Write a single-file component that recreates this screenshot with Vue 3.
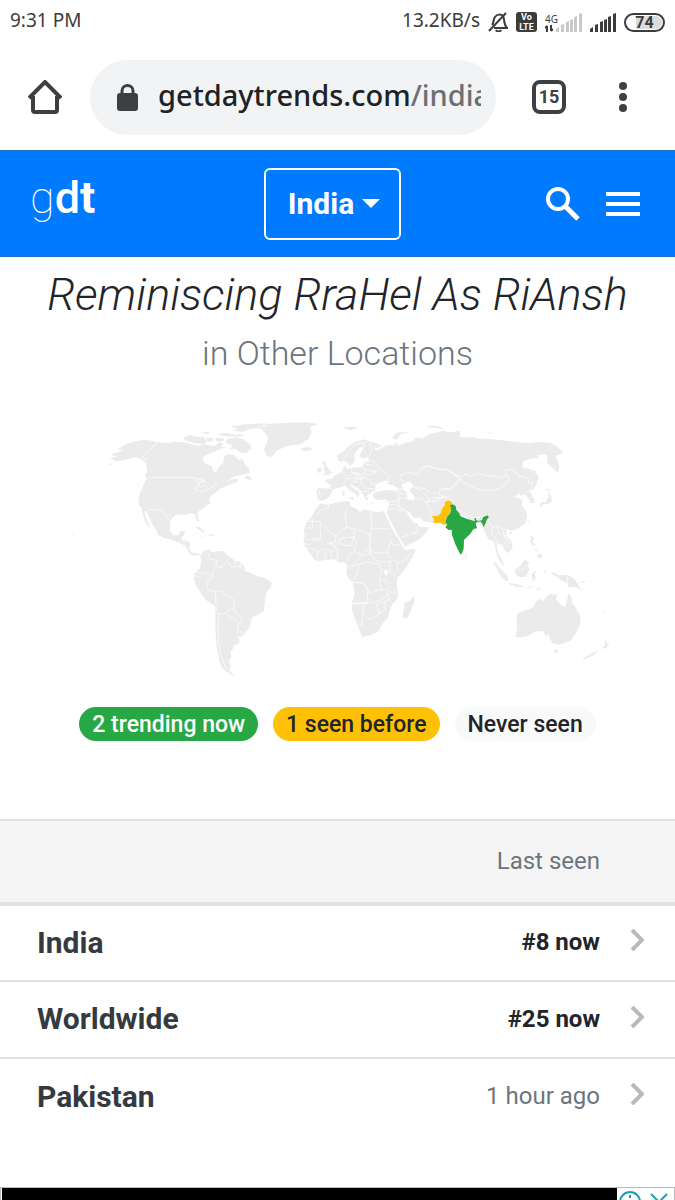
<template>
  <div class="screen">
    <!-- phone status bar -->
    <div class="status">
      <span class="clock">9:31 PM</span>
      <div class="status-right">
        <span class="speed">13.2KB/s</span>
        <svg class="bell" viewBox="0 0 20 20" aria-hidden="true">
          <path d="M1 19 18 1M4 13c2-2 1-6 3-8 2-3 6-3 8-1 2 3 0 8 4 12H6M8 18c1 2 4 2 5 0" />
        </svg>
        <span class="volte"><b>Vo</b><b>LTE</b></span>
        <span class="data">
          <span class="data-label"><small>4G</small>
            <svg viewBox="0 0 8 7" aria-hidden="true"><path d="M2 7V1M0 3l2-2M6 0v6M8 4 6 6" /></svg>
          </span>
          <svg class="bars faded" viewBox="0 0 26 19" aria-hidden="true">
            <path v-for="b in bars" :key="b" :d="b" />
          </svg>
        </span>
        <svg class="bars" viewBox="0 0 26 19" aria-hidden="true">
          <path v-for="b in bars" :key="b" :d="b" />
        </svg>
        <span class="battery"><span class="battery-fill">74</span></span>
      </div>
    </div>

    <!-- browser toolbar -->
    <div class="toolbar">
      <button class="plain" aria-label="Home">
        <svg class="home" viewBox="0 0 34 34"><path d="M1 18 17 2l16 16M5 16v14q0 2 2 2h20q2 0 2-2V16" /></svg>
      </button>
      <div class="address">
        <svg class="lock" viewBox="0 0 21 27" aria-hidden="true">
          <rect x="0" y="9" width="21" height="18" rx="3" />
          <path d="M5 11V7a5 5 0 0 1 11 0v4" />
        </svg>
        <a class="url" href="#">getdaytrends.com<span>/india</span></a>
      </div>
      <button class="tabs" aria-label="Tabs">15</button>
      <button class="plain" aria-label="More">
        <svg class="dots" viewBox="0 0 8 30"><circle cx="4" cy="4" r="4" /><circle cx="4" cy="15" r="4" /><circle cx="4" cy="26" r="4" /></svg>
      </button>
    </div>

    <header class="navbar">
      <a class="logo" href="#"><span>g</span><b>d</b><strong>t</strong></a>
      <button class="country">India <i class="caret"></i></button>
      <div class="nav-icons">
        <button class="plain" aria-label="Search">
          <svg viewBox="0 0 34 34"><circle cx="12" cy="12" r="10" /><path d="m19 19 13 13" class="handle" /></svg>
        </button>
        <button class="plain" aria-label="Menu">
          <svg viewBox="0 0 34 34"><path d="M0 7h34M0 17h34M0 27h34" /></svg>
        </button>
      </div>
    </header>

    <main>
      <h1>Reminiscing RraHel As RiAnsh</h1>
      <h2>in Other Locations</h2>

      <svg class="map" viewBox="0 0 2025 810" role="img" aria-label="World map">
        <g transform="translate(180 0)">
          <path v-for="d in americas" :key="d" :d="d" class="land" />
          <path v-for="d in americaBorders" :key="d" :d="d" class="border" />
        </g>
        <g transform="translate(1260 0)">
          <path v-for="d in eastAsia" :key="d" :d="d" class="land" />
        </g>
        <g transform="translate(840 0)">
          <path v-for="d in euroAfrica" :key="d" :d="d" class="land" />
          <path v-for="d in seas" :key="d" :d="d" class="sea" />
          <path v-for="d in euroAfricaBorders" :key="d" :d="d" class="border" />
        </g>
        <g transform="translate(1260 0)">
          <path v-for="d in eastBorders" :key="d" :d="d" class="border" />
          <path class="now" d="M88 286 98 283 107 288 109 300 118 310 122 319 140 326 160 332 165 334 163 324 167 324 169 331 174 333 186 331 190 321 202 316 207 322 200 329 197 339 191 352 187 341 181 334 171 337 167 340 171 355 161 357 151 371 140 382 132 390 131 416 124 434 119 430 106 403 96 375 95 359 85 360 76 351 82 344 75 337 81 320 91 309 93 294Z" />
          <path class="seen" d="M36 318 53 318 63 309 67 294 75 286 74 276 86 271 97 278 97 283 88 286 93 294 90 309 80 320 75 332 80 343 72 345 64 338 38 338 43 329Z" />
        </g>
      </svg>

      <ul class="legend">
        <li class="badge green">2 trending now</li>
        <li class="badge yellow">1 seen before</li>
        <li class="badge light">Never seen</li>
      </ul>

      <table>
        <thead>
          <tr>
            <th></th>
            <th class="seen-col">Last seen</th>
            <th class="arrow-col"></th>
          </tr>
        </thead>
        <tbody>
          <tr v-for="row in rows" :key="row.place">
            <td><a href="#">{{ row.place }}</a></td>
            <td class="seen-col" :class="{ current: row.now }">{{ row.seen }}</td>
            <td class="arrow-col">
              <svg viewBox="0 0 14 22" aria-hidden="true"><path d="m2 1 10 10L2 21" /></svg>
            </td>
          </tr>
        </tbody>
      </table>
    </main>

    <div class="ad">
      <div class="ad-body"></div>
      <div class="ad-choices">
        <svg viewBox="0 0 54 12" aria-hidden="true">
          <circle cx="13" cy="14" r="10" /><path d="M13 7v3M13 13v3M34 6l16 16M50 6 34 22" />
        </svg>
      </div>
    </div>
  </div>
</template>

<script setup>
const rows = [
  { place: 'India', seen: '#8 now', now: true },
  { place: 'Worldwide', seen: '#25 now', now: true },
  { place: 'Pakistan', seen: '1 hour ago', now: false }
]

const bars = ['M0 19v-3l3-2v5z', 'M5 19v-7l3-1v8z', 'M10 19V9l3-1v11z', 'M14 19V7l3-1v13z', 'M18 19V4l3-1v16z', 'M23 19V1l3-1v19z']

const americas = [
  'M150 145 170 140 152 132 178 126 188 120 172 118 200 102 232 92 258 89 292 97 325 99 345 95 380 98 410 107 440 104 462 108 480 96 490 100 484 110 500 112 480 118 455 128 430 140 428 152 440 162 456 168 460 184 468 188 474 174 490 158 492 142 502 132 524 136 534 150 548 146 556 166 570 180 566 190 545 194 520 200 498 216 520 206 534 207 532 216 505 226 480 236 468 246 455 256 448 266 450 280 430 294 414 306 412 316 417 330 414 338 408 326 404 312 388 310 376 314 350 314 334 326 330 340 330 362 340 376 355 376 362 364 376 362 372 376 364 382 366 390 384 392 390 400 388 416 396 428 408 430 418 430 418 435 400 438 388 428 376 408 360 400 335 390 312 384 294 374 288 360 278 344 266 318 258 302 253 302 256 320 266 340 270 354 256 336 248 312 244 294 236 284 235 262 246 236 256 212 262 206 254 196 262 186 258 160 248 150 228 142 205 146 190 150 170 155Z',
  'M368 84 390 74 410 80 432 82 440 94 434 104 408 100 382 94Z',
  'M440 84 460 84 458 94 442 96Z', 'M466 84 490 84 492 92 470 95Z',
  'M500 88 530 82 550 88 572 104 574 118 560 124 566 130 542 128 528 118 506 118 520 106 498 100Z',
  'M470 72 500 68 524 74 552 72 548 79 500 80Z', 'M420 67 450 65 444 73Z',
  'M510 50 560 42 624 40 600 50 572 57 548 66 520 62 534 55Z',
  'M572 52 625 48 612 43 680 38 740 37 775 42 750 50 755 66 745 88 722 102 680 108 650 122 634 142 618 136 612 116 620 100 624 80 612 66 604 56Z',
  'M554 206 560 196 572 200 576 212Z', 'M142 164 160 158 154 164Z', 'M36 368 42 372 37 374Z',
  'M404 350 420 352 436 366 428 366Z', 'M446 372 466 374 460 378 448 377Z', 'M422 378 432 380 424 382Z',
  'M436 420 448 418 454 426 472 424 490 424 502 436 516 444 526 454 540 454 552 468 556 484 572 488 590 498 614 504 634 516 634 530 618 550 614 578 612 602 596 614 576 622 570 648 556 670 542 682 532 678 540 694 532 704 520 706 520 716 512 724 514 742 506 754 512 766 508 782 516 790 500 786 486 774 478 752 470 710 466 660 466 588 440 572 424 552 408 526 402 508 404 490 420 474 424 450 420 436Z',
  'M508 788 528 796 514 796Z'
]

const americaBorders = [
  'M294 97 244 141 262 152', 'M266 202H400L420 208 436 218', 'M262 299 296 300 314 310 326 330',
  'M400 206 424 208 436 214 424 216 408 212', 'M404 238 416 218 420 232 436 226 442 238 428 246 412 240Z',
  'M440 242 470 222', 'M364 390 358 398M384 392 370 396',
  'M444 428 448 446 470 450 468 470 460 480 458 502 440 514 444 540 466 546 468 588',
  'M404 498 422 500 434 488M410 486 458 494', 'M470 470 486 472 496 458 508 460 514 472 550 468M508 440 500 456M528 454 524 470M542 456 540 470',
  'M466 546 482 542 498 556 516 564 524 580 522 596 506 600 496 610 476 614 468 592', 'M496 610 522 626 536 642 546 638 544 622 526 610 522 596',
  'M476 614 474 660 476 700 484 742 500 778', 'M536 642 532 660 532 680M534 658 552 670'
]

const euroAfrica = [
  'M62 116 80 110 96 114 92 121 72 123Z', 'M188 52 215 50 236 54 210 61Z',
  'M128 152 138 158 136 166 150 180 156 188 144 194 128 196 136 186 130 178 134 170 126 162Z', 'M112 176 124 172 124 186 110 188Z',
  'M174 150 172 136 188 126 208 108 224 96 252 88 264 92 272 110 276 128 264 142 246 144 238 136 246 122 250 114 244 110 232 120 222 136 226 148 220 160 208 168 202 156 192 152 182 156Z',
  'M256 94 270 94 300 104 306 110 290 114 280 112 290 122 304 114 320 106 340 106 352 96 352 108 372 100 400 94 404 84 424 84 434 100 430 110 440 88 450 80 480 72 540 62V290L500 345 456 338 430 334 418 322 400 324 386 304 378 302 388 320 400 338 412 340 416 350 446 352 440 366 420 386 396 400 374 410 368 398 350 368 330 330 320 306 326 290 326 276 316 268 290 270 276 258 284 248 310 240 356 242 352 234 338 224 326 228 320 220 332 212 312 212 290 222 284 244 272 250 260 258 266 268 258 270 250 254 240 242 222 228 208 218 216 232 234 244 240 252 232 262 226 252 208 240 196 226 180 232 160 238 154 250 146 262 132 270 122 272 112 266 110 240 118 234 150 236 152 224 136 214 140 208 156 206 166 196 180 190 188 178 196 166 202 176 232 172 248 172 250 158 268 152 262 140Z',
  'M337 82 352 68 384 66 360 74 352 88 344 88Z', 'M440 46 480 50 494 56 466 54Z',
  'M206 262 222 262 220 270 208 266Z', 'M186 244 194 244 194 256 188 258Z', 'M268 278 282 278 276 281Z', 'M312 276 322 274 316 280Z',
  'M108 296 122 280 140 284 168 278 200 272 212 276 210 288 230 296 240 306 252 298 268 302 290 306 312 304 318 316 330 344 342 366 356 388 366 408 376 420 406 416 404 428 390 454 370 484 352 504 350 524 354 546 354 564 338 582 328 602 324 624 308 640 296 664 272 676 246 680 240 664 230 640 216 600 216 576 224 550 218 516 204 504 198 484 202 468 196 456 178 458 166 448 140 450 112 454 96 440 82 420 70 400 74 380 72 356 80 336 98 316Z',
  'M402 556 404 572 392 604 382 624 370 626 368 610 374 592 372 580 390 572Z'
]

const seas = [
  'M364 224 388 214 402 228 388 240 404 262 400 272 382 268 380 248 370 236Z',
  'M312 484 322 482 324 492 314 496Z', 'M286 226 312 218 346 230 352 240 318 240 290 246Z'
]

const euroAfricaBorders = [
  // europe
  'M188 150 204 130 222 104 250 98 262 94', 'M250 98 252 114', 'M268 98 276 118 264 142M270 146 286 160 300 178 328 196 322 212',
  'M184 184 196 194 198 208 190 222M186 176 190 192M214 176 218 190 204 200M200 206 220 204 238 192 220 186M218 190 238 196 252 190M252 172 256 186 250 202 226 206M256 178 284 184 298 180M250 160 276 166M252 152 270 154M250 202 266 208 276 222 288 224M222 212 244 204 242 222 232 232M216 216 234 216M244 220 254 234 280 236M234 234 246 246 268 242M150 238 170 240M118 244 122 262',
  'M276 180 288 188 258 196M284 248 276 244',
  // western and central asia
  'M340 232 378 240M350 242 360 256 356 272 328 276M360 250 380 250M380 266 356 264M356 274 358 290 376 302M328 284 344 284 358 292 376 306M328 296 348 296 366 306M366 382 392 372 412 364 410 348M400 372 414 366',
  'M370 214 358 204 366 192 388 188 414 194 416 184 446 168 476 178 498 178 536 202M382 226 384 240M404 232 424 244 448 266 440 280 450 300 452 320 456 336M404 266 428 266 444 282M404 232 434 236 454 250 474 248 486 234 508 238 540 206M448 266 472 262 490 262 506 260M480 240 478 256 492 258M456 272 464 278 478 266',
  // africa
  'M108 316 124 300 146 292 146 280M80 334 100 334 120 334 146 362M98 328V354H74M120 334 122 386 76 388M146 362 168 378 166 396 142 400M168 376 200 350 196 328 198 304M200 350 220 358 224 376 214 402M220 354 270 374 272 396M272 304 276 356H330M276 356 268 396 270 424M180 386 222 380M170 404 178 388M178 386 184 404 222 408M166 408 174 422 172 450M222 380 230 400 224 422 208 436 198 454M140 402 160 402 166 420M100 396 122 386M70 400 88 404M80 414 100 416 114 426 138 416 160 426M112 426V452M136 422V450M154 424V448M94 434 104 422M224 424 242 434 268 418 272 430 242 440 218 462M272 430 286 452 318 456 336 452M268 396 274 424 290 430 322 426 330 402 336 388M330 400 362 408M322 426 330 444 352 458 376 450 390 430M330 456 330 484 350 500M352 458 354 490M202 468H222L236 462 232 488 218 512M236 462 262 456 296 462 304 480 298 508 304 540 280 544 268 550 262 532 248 518H220M218 516 252 520 262 544 264 576 216 580M298 508 318 510 322 526M306 480 330 484M322 530 330 546 350 546M304 540 318 538 322 556 298 572 270 580M324 552 328 570 314 576 288 584 300 612 316 600 314 576M264 580 250 586 248 610 270 630 300 610M248 610 246 644 234 646M288 644 296 636M216 582 264 580'
]

const eastAsia = [
  'M0 100 10 92 8 84 30 72 70 62 105 72 120 82 160 82 178 86 200 86 240 90 290 96 330 100 354 96 390 98 410 108 430 128 416 134 406 138 412 150 418 170 414 190 396 172 382 158 382 136 370 132 352 136 356 144 330 146 310 154 306 172 330 178 346 196 352 214 344 234 328 244 340 262 346 278 332 280 326 266 314 252 300 258 298 248 284 260 304 268 308 276 304 288 318 302 322 322 314 342 296 354 276 362 262 358 256 372 274 392 278 412 264 430 254 420 246 404 234 398 230 412 236 432 248 452 252 470 240 456 230 434 222 396 212 390 202 384 190 356 180 340 160 332 120 312 100 290 60 290 0 250Z',
  'M132 430 142 440 140 446 136 442Z', 'M266 368 278 364 272 374Z', 'M326 340 330 330 330 344Z',
  'M334 176 346 184 358 206 350 214 342 198Z', 'M366 232 374 238 392 238 384 244Z',
  'M384 244 392 256 396 272 390 280 368 284 362 288 362 278 376 276 386 262Z', 'M358 282 366 288 362 294Z', 'M332 378 342 382 338 398 348 402 340 408 332 396Z',
  'M350 436 362 430 368 440 362 446 352 440Z', 'M342 410 350 420 358 424 348 424Z',
  'M218 454 228 458 240 474 262 498 266 514 258 514 244 500 234 482Z', 'M266 518 292 522 312 530 296 532 268 524Z', 'M318 530 346 530 324 534Z', 'M350 536 366 532 354 542Z',
  'M284 478 300 468 316 448 328 458 322 468 328 478 318 500 300 502 288 494Z', 'M336 490 342 486 354 482 342 492 352 508 344 504 342 516 336 506Z',
  'M372 478 378 484 374 490Z', 'M394 488 408 488 414 496 424 494 446 496 462 506 472 518 478 530 486 542 466 530 446 532 438 518 422 510 412 502 398 494Z', 'M476 518 496 512 492 518Z', 'M508 510 522 518 516 518Z',
  'M292 610 310 602 326 598 342 590 348 574 360 566 368 574 380 560 390 552 412 554 408 568 422 584 436 590 446 550 454 562 456 580 466 592 482 620 480 644 466 672 452 692 432 700 418 704 396 700 390 686 386 670 380 682 368 664 346 664 328 676 304 682 286 682 292 660 290 634Z',
  'M402 720 416 718 410 730 402 730Z', 'M556 686 562 700 568 702 558 716 546 714 554 706Z', 'M486 746 512 732 536 720 522 736 492 748Z',
  'M548 602 554 608 550 610Z', 'M614 586 622 584 620 588Z', 'M20 48 44 48 60 52 36 53Z', 'M196 68 220 68 210 72Z'
]

const eastBorders = [
  'M0 172 26 168 56 178 78 178 118 200 136 192 156 200 168 190 196 196 226 198 246 202 262 198 268 212 244 232 218 242 172 238 142 224 120 208',
  'M118 200 120 208 96 238 68 240M262 198 254 182 272 178 296 196 326 206 326 220 338 216 334 234 322 248M334 264 342 262',
  'M100 282 96 272 78 262 66 260 44 272 20 276M102 286 126 306 160 324 200 316 208 338 218 354 232 348 250 358 262 358M218 354 214 372 230 388 230 406M232 352 236 370 254 376 260 396 248 404M246 356 252 372 268 392 266 406 256 414M172 340 184 342M442 496V532M286 474 306 482 324 464'
]
</script>

<style>
body {
  margin: 0;
  background: #fff;
}
</style>

<style scoped>
.screen {
  display: flex;
  flex-direction: column;
  min-height: 100vh;
  overflow: hidden;
  font-family: Roboto, "Liberation Sans", sans-serif;
  color: #212529;
}

button {
  font: inherit;
  cursor: pointer;
}

a {
  color: inherit;
  text-decoration: none;
}

.plain {
  display: flex;
  padding: 0;
  border: 0;
  background: none;
}

/* status bar */
.status {
  display: flex;
  justify-content: space-between;
  align-items: center;
  box-sizing: border-box;
  height: 44px;
  padding: 0 10px;
  font-family: "Noto Sans", sans-serif;
  font-size: 19px;
  color: #3c3c3c;
}

.clock,
.speed {
  padding-bottom: 4px;
}

.status-right {
  display: flex;
  align-items: center;
  gap: 8px;
}

.bell {
  width: 20px;
  height: 20px;
  fill: none;
  stroke: #3c3c3c;
  stroke-width: 2;
}

.volte {
  display: flex;
  flex-direction: column;
  align-items: center;
  width: 21px;
  border-radius: 3px;
  background: #3c3c3c;
  color: #fff;
  font-family: Roboto, sans-serif;
  font-size: 9px;
  line-height: 10px;
}

.data {
  display: flex;
  align-items: flex-end;
}

.data-label {
  display: flex;
  flex-direction: column;
  width: 11px;
  line-height: 12px;
}

.data-label small {
  font-size: 10px;
}

.data-label svg {
  width: 8px;
  height: 7px;
  fill: none;
  stroke: #3c3c3c;
  stroke-width: 2;
}

.bars {
  width: 26px;
  height: 19px;
  fill: #3c3c3c;
}

.faded {
  fill: #c9c9c9;
}

.battery {
  display: flex;
  justify-content: center;
  box-sizing: border-box;
  width: 41px;
  height: 19px;
  padding: 1px;
  border: 2px solid #3c3c3c;
  border-radius: 10px;
  font: bold 16px/14px Roboto, sans-serif;
}

.battery-fill {
  flex: 1;
  border-radius: 7px;
  background: linear-gradient(90deg, transparent 26%, #dcdcdc 26%);
  text-align: center;
}

/* browser toolbar */
.toolbar {
  display: flex;
  align-items: center;
  box-sizing: border-box;
  height: 106px;
  padding: 0 48px 0 28px;
}

.home {
  width: 34px;
  height: 34px;
  fill: none;
  stroke: #3c4043;
  stroke-width: 4;
}

.address {
  display: flex;
  flex: 1;
  align-items: center;
  gap: 20px;
  min-width: 0;
  height: 75px;
  box-sizing: border-box;
  margin: 0 36px 0 28px;
  padding: 0 15px 0 27px;
  border-radius: 38px;
  background: #f1f3f4;
}

.lock {
  flex: none;
  width: 21px;
  height: 27px;
  fill: #3c4043;
}

.lock path {
  fill: none;
  stroke: #3c4043;
  stroke-width: 3;
}

.url {
  flex: 1;
  overflow: hidden;
  padding-bottom: 4px;
  font: 500 29px/40px "Noto Sans", sans-serif;
  white-space: nowrap;
  color: #202124;
}

.url span {
  color: #6b6f73;
}

.tabs {
  box-sizing: border-box;
  width: 34px;
  height: 34px;
  margin-right: 53px;
  padding: 0;
  border: 4px solid #3c4043;
  border-radius: 8px;
  background: none;
  color: #3c4043;
  font-size: 18px;
  font-weight: bold;
  line-height: 26px;
}

.dots {
  width: 8px;
  height: 30px;
  fill: #3c4043;
}

/* site header */
.navbar {
  display: grid;
  grid-template-columns: 1fr auto 1fr;
  align-items: center;
  box-sizing: border-box;
  height: 107px;
  padding: 0 35px 0 25px;
  border-top: 1px solid #1a6fc4;
  border-bottom: 1px solid #1a6fc4;
  background: #007bff;
  color: #fff;
}

.logo {
  padding: 0 0 12px 5px;
  font-size: 45px;
  line-height: 52px;
}

.logo span {
  font-weight: 100;
}

.logo b {
  font-weight: 500;
}

.logo strong {
  font-weight: 700;
}

.country {
  display: flex;
  align-items: center;
  gap: 8px;
  box-sizing: border-box;
  height: 72px;
  padding: 0 19px 0 22px;
  border: 2px solid #fff;
  border-radius: 6px;
  background: none;
  color: #fff;
  font-size: 30px;
  font-weight: bold;
}

.caret {
  border: 9px solid transparent;
  border-top-color: #fff;
  border-bottom: 0;
}

.nav-icons {
  display: flex;
  justify-content: flex-end;
  gap: 26px;
}

.nav-icons svg {
  width: 34px;
  height: 34px;
  fill: none;
  stroke: #fff;
  stroke-width: 4;
}

.nav-icons .handle {
  stroke-width: 5;
}

/* headings */
h1,
h2 {
  margin: 0;
  text-align: center;
  font-weight: 300;
}

h1 {
  padding-top: 11px;
  font-size: 45px;
  font-style: italic;
  line-height: 54px;
}

h2 {
  padding-top: 11px;
  font-size: 34px;
  line-height: 40px;
  color: #6c757d;
}

/* map */
.map {
  display: block;
  width: 100%;
  margin-top: 37px;
}

.land {
  fill: #ebebeb;
}

.sea {
  fill: #fff;
}

.border {
  fill: none;
  stroke: #fff;
  stroke-width: 2;
}

.now {
  fill: #28a745;
}

.seen {
  fill: #ffc107;
}

.legend {
  display: flex;
  justify-content: center;
  gap: 15px;
  margin: 27px 0 78px;
  padding: 0;
  list-style: none;
}

.badge {
  padding: 1px 13px 0;
  border-radius: 17px;
  font-size: 23px;
  font-weight: 500;
  line-height: 33px;
}

.green {
  background: #28a745;
  color: #fff;
}

.yellow {
  background: #ffc107;
}

.light {
  background: #f8f9fa;
}

/* locations */
table {
  width: 100%;
  border-collapse: collapse;
}

th,
td {
  box-sizing: border-box;
  height: 77px;
  padding: 0 0 2px;
  border-top: 2px solid #dee2e6;
  text-align: left;
}

th {
  height: 84px;
  border-bottom: 4px solid #dee2e6;
  background: #f5f5f5;
}

td:first-child {
  padding-left: 37px;
  font-size: 30px;
  font-weight: bold;
  color: #343a40;
}

.seen-col {
  text-align: right;
  font-size: 24px;
  font-weight: 400;
  color: #6c757d;
}

.current {
  font-weight: bold;
  color: #212529;
}

.arrow-col {
  width: 75px;
  padding-right: 2px;
  text-align: center;
}

.arrow-col svg {
  width: 14px;
  height: 22px;
  fill: none;
  stroke: #b9b9b9;
  stroke-width: 4;
}

/* ad strip */
.ad {
  display: flex;
  box-sizing: border-box;
  height: 13px;
  margin-top: auto;
  border: 1px solid #bbb;
  border-bottom: 0;
}

.ad-body {
  flex: 1;
  margin-left: 1px;
  background: #000;
}

.ad-choices {
  width: 57px;
}

.ad-choices svg {
  display: block;
  width: 54px;
  height: 12px;
  fill: none;
  stroke: #1a9fb5;
  stroke-width: 2;
}
</style>
